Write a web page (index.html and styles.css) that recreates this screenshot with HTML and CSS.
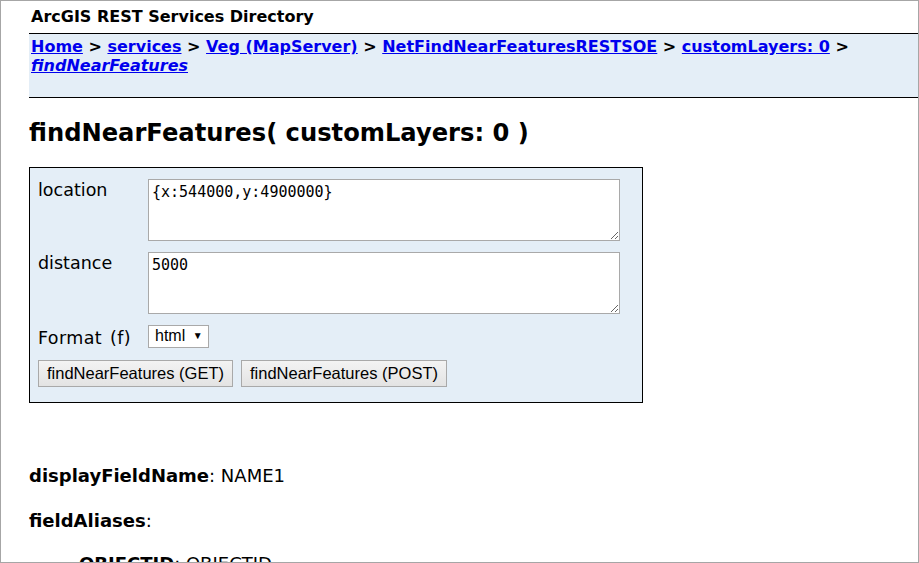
FILE: index.html
```html
<!DOCTYPE html>
<html>
<head>
<meta charset="utf-8">
<link rel="stylesheet" href="styles.css">
</head>
<body>
<div class="frame">
  <div class="title">ArcGIS REST Services Directory</div>
  <div class="breadcrumbs">
    <a href="#">Home</a> &gt; <a href="#">services</a> &gt; <a href="#">Veg (MapServer)</a> &gt; <a href="#">NetFindNearFeaturesRESTSOE</a> &gt; <a href="#">customLayers: 0</a> &gt;<br>
    <a href="#" class="current">findNearFeatures</a>
  </div>
  <h2 class="heading">findNearFeatures( customLayers: 0 )</h2>
  <div class="form-box">
    <div class="form-row">
      <label class="lbl">location</label>
      <textarea class="ta">{x:544000,y:4900000}</textarea>
    </div>
    <div class="form-row">
      <label class="lbl">distance</label>
      <textarea class="ta">5000</textarea>
    </div>
    <div class="form-row fmt">
      <label class="lbl">Format (f)</label>
      <div class="select">html <span class="arrow">▼</span></div>
    </div>
    <div class="buttons">
      <button class="btn">findNearFeatures (GET)</button>
      <button class="btn">findNearFeatures (POST)</button>
    </div>
  </div>
  <div class="prop first"><b>displayFieldName</b>: NAME1</div>
  <div class="prop"><b>fieldAliases</b>:</div>
  <div class="prop sub"><b>OBJECTID</b>: OBJECTID</div>
</div>
</body>
</html>
```
FILE: styles.css
```css
html, body {
  margin: 0;
  padding: 0;
  background: #fff;
}
.frame {
  box-sizing: border-box;
  width: 919px;
  height: 563px;
  border: 1px solid #a6a6a6;
  overflow: hidden;
  padding-left: 28px;
  font-family: "DejaVu Sans", Verdana, sans-serif;
  color: #000;
}
.title {
  font-weight: bold;
  font-size: 16px;
  line-height: 19px;
  padding: 6px 0 0 2px;
  box-sizing: border-box;
  height: 32px;
}
.breadcrumbs {
  background: #e4eef7;
  border-top: 1px solid #000;
  border-bottom: 1px solid #000;
  padding: 3px 0 0 2px;
  box-sizing: border-box;
  height: 65px;
  font-weight: bold;
  font-size: 16px;
  line-height: 19px;
}
.breadcrumbs a {
  color: #0000ee;
}
.breadcrumbs a.current {
  font-style: italic;
}
.heading {
  font-size: 24.2px;
  font-weight: bold;
  margin: 20px 0 19px 0;
  line-height: 30px;
}
.form-box {
  width: 614px;
  height: 236px;
  box-sizing: border-box;
  border: 1px solid #000;
  background: #e4eef7;
  padding: 11px 8px 0 8px;
  display: flex;
  flex-direction: column;
}
.form-row {
  display: flex;
  align-items: flex-start;
  margin-bottom: 11px;
}
.lbl {
  width: 110px;
  font-size: 17.5px;
  word-spacing: 2px;
  padding-top: 1px;
}
.ta {
  width: 472px;
  height: 62px;
  box-sizing: border-box;
  border: 1px solid #a9a9a9;
  font-family: "DejaVu Sans Mono", monospace;
  font-size: 15px;
  padding: 3px 3px;
  margin: 0;
  background: #fff;
  color: #000;
}
.fmt {
  align-items: center;
  margin-bottom: 12px;
}
.fmt .lbl {
  padding-top: 3px;
  letter-spacing: 0.4px;
}
.select {
  box-sizing: border-box;
  height: 23px;
  width: 61px;
  border: 1px solid #a9a9a9;
  background: #fff;
  font-family: "Liberation Sans", Arial, sans-serif;
  font-size: 16px;
  padding: 1px 0 0 6px;
}
.arrow {
  font-size: 10px;
  vertical-align: 2px;
  margin-left: 3px;
}
.buttons {
  display: flex;
  gap: 8px;
}
.btn {
  box-sizing: border-box;
  height: 27px;
  border: 1px solid #a9a9a9;
  background: linear-gradient(#f3f3f3, #e3e3e3);
  font-family: "Liberation Sans", Arial, sans-serif;
  font-size: 16.5px;
  padding: 0 8px;
  color: #000;
  margin: 0;
}
.prop {
  font-size: 18px;
  line-height: 22px;
  margin-top: 23px;
}
.prop.first {
  margin-top: 62px;
}
.sub {
  padding-left: 50px;
  margin-top: 21px;
}
```
